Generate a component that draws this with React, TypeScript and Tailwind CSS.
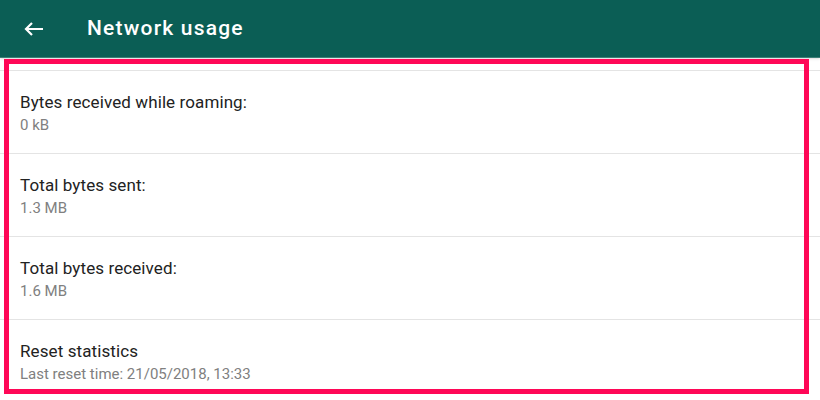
const rows = [
  { title: 'Bytes received while roaming:', value: '0 kB' },
  { title: 'Total bytes sent:', value: '1.3 MB' },
  { title: 'Total bytes received:', value: '1.6 MB' },
  { title: 'Reset statistics', value: 'Last reset time: 21/05/2018, 13:33' },
];

const App = () => {
  return (
    <div className="relative w-[820px] h-[400px] overflow-hidden bg-white font-['Roboto',sans-serif]">
      <div className="h-[58px] bg-[#0b5e55] flex items-center border-b border-[#3d7f77] shadow-sm">
        <button className="ml-[24px] w-[20px] h-[14px] text-white">
          <svg width="20" height="14" viewBox="0 0 20 14" fill="none">
            <path
              d="M19 7H2M8 1L2 7l6 6"
              stroke="currentColor"
              strokeWidth="2.2"
            />
          </svg>
        </button>
        <h1 className="ml-[43px] mt-[1px] text-[21px] font-medium text-white tracking-[1.2px]">
          Network usage
        </h1>
      </div>

      <div className="flex flex-col">
        <div className="h-[13px] border-b border-[#e4e4e4]" />
        {rows.map((row) => (
          <div
            key={row.title}
            className="h-[83px] border-b border-[#e4e4e4] pl-[20px] pt-[21px]"
          >
            <p className="text-[17px] leading-[20px] text-[#222222] tracking-[0.1px]">
              {row.title}
            </p>
            <p className="mt-[4px] text-[15px] leading-[18px] text-[#808080]">
              {row.value}
            </p>
          </div>
        ))}
      </div>

      {/* highlight frame */}
      <div className="absolute left-[4px] top-[59px] w-[805px] h-[335px] border-[5px] border-[#ff0757] pointer-events-none" />
    </div>
  );
};

export default App;
